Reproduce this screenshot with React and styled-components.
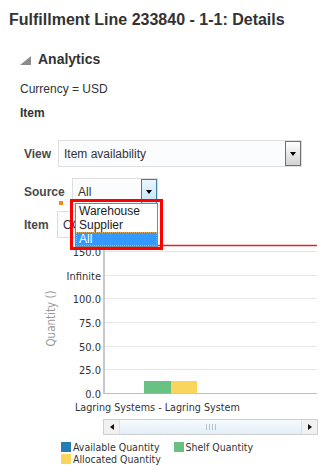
import styled, { createGlobalStyle } from "styled-components";

const GlobalStyle = createGlobalStyle`
  body {
    margin: 0;
    background: #fff;
    font-family: "Liberation Sans", Arial, sans-serif;
    color: #333;
  }
`;

const CHART_FONT = '"DejaVu Sans Condensed", "DejaVu Sans", sans-serif';

const Page = styled.div`
  width: 326px;
  height: 476px;
  overflow: hidden;
`;

const Title = styled.h1`
  margin: 0;
  padding: 11px 0 0 9px;
  font-size: 16px;
  line-height: 18px;
  font-weight: bold;
  color: #333;
  white-space: nowrap;
`;

const SectionHeader = styled.div`
  display: flex;
  align-items: center;
  gap: 7px;
  margin-top: 22px;
  padding-left: 20px;
`;

const Disclosure = styled.span`
  width: 0;
  height: 0;
  margin-top: 2px;
  border-left: 11px solid transparent;
  border-bottom: 9px solid #8c8c8c;
`;

const SectionTitle = styled.h2`
  margin: 0;
  font-size: 14px;
  line-height: 16px;
  font-weight: bold;
  color: #333;
`;

const Currency = styled.div`
  margin-top: 15px;
  padding-left: 20px;
  font-size: 12px;
  line-height: 14px;
`;

const SubHeading = styled.div`
  margin-top: 10px;
  padding-left: 20px;
  font-size: 12px;
  line-height: 14px;
  font-weight: bold;
`;

const Form = styled.div`
  position: relative;
  margin-top: 20px;
`;

const Row = styled.div`
  position: relative;
  display: flex;
  align-items: center;
  padding-left: 24px;
  margin-top: ${(p) => p.$gap || 0}px;
`;

const Label = styled.label`
  width: ${(p) => p.$width}px;
  flex-shrink: 0;
  font-size: 12px;
  font-weight: bold;
  color: #4a4a4a;
`;

const Field = styled.div`
  box-sizing: border-box;
  width: ${(p) => p.$width}px;
  height: 27px;
  display: flex;
  align-items: center;
  border: 1px solid #dedede;
  background: #fbfcfe;
  font-size: 12px;
  color: #333;
`;

const Value = styled.span`
  flex: 1;
  padding-left: 5px;
  white-space: nowrap;
`;

const DropButton = styled.span`
  box-sizing: border-box;
  width: 16px;
  height: 25px;
  display: flex;
  align-items: center;
  justify-content: center;
  border: 1px solid ${(p) => (p.$active ? "#3c7fb1" : "#707070")};
  background: ${(p) =>
    p.$active
      ? "linear-gradient(#eaf6fd, #c4e5f7)"
      : "linear-gradient(#ffffff, #d2d2d2)"};
`;

const Arrow = styled.span`
  width: 0;
  height: 0;
  border-left: 3.5px solid transparent;
  border-right: 3.5px solid transparent;
  border-top: 4px solid #000;
`;

const Marker = styled.span`
  position: absolute;
  left: 59px;
  top: 23px;
  width: 4px;
  height: 4px;
  background: #f28c0f;
`;

const Highlight = styled.div`
  position: absolute;
  left: 70px;
  top: 59px;
  width: 93px;
  height: 51px;
  box-sizing: border-box;
  border: 3px solid #ff0000;
  z-index: 3;
  pointer-events: none;
`;

const OptionList = styled.ul`
  position: absolute;
  left: 75px;
  top: 63px;
  width: 83px;
  margin: 0;
  padding: 0;
  list-style: none;
  box-sizing: border-box;
  border: 1px solid #7f8790;
  background: #fff;
  z-index: 2;
`;

const Option = styled.li`
  box-sizing: border-box;
  height: 14px;
  line-height: 13px;
  padding-left: 2px;
  font-size: 12px;
  color: ${(p) => (p.$selected ? "#fff" : "#1c1c1c")};
  background: ${(p) => (p.$selected ? "#3399ff" : "transparent")};
  border: 1px dotted ${(p) => (p.$selected ? "#d7a85a" : "transparent")};
`;

const Chart = styled.svg`
  display: block;
  margin-top: 2px;
  font-family: ${CHART_FONT};
`;

const Scrollbar = styled.div`
  box-sizing: border-box;
  display: flex;
  width: 215px;
  height: 16px;
  margin: 1px 0 0 103px;
  border: 1px solid #cfcfcf;
  background: #f3f3f3;
`;

const ScrollButton = styled.span`
  width: 15px;
  display: flex;
  align-items: center;
  justify-content: center;
  background: #f1f1f1;
`;

const ScrollArrow = styled.span`
  width: 0;
  height: 0;
  border-top: 3px solid transparent;
  border-bottom: 3px solid transparent;
  ${(p) =>
    p.$dir === "left"
      ? "border-right: 4px solid #111;"
      : "border-left: 4px solid #111;"}
`;

const Thumb = styled.span`
  flex: 1;
  display: flex;
  align-items: center;
  justify-content: center;
  gap: 2px;
  background: linear-gradient(#f7fbfe, #e3eef8);
  border-left: 1px solid #d6e2ee;
  border-right: 1px solid #d6e2ee;
`;

const Grip = styled.span`
  width: 1px;
  height: 6px;
  background: #b9c2ca;
`;

const Legend = styled.div`
  display: flex;
  flex-wrap: wrap;
  column-gap: 14px;
  width: 210px;
  margin: 6px 0 0 61px;
  font-family: ${CHART_FONT};
  font-size: 10.5px;
  line-height: 12px;
  color: #333;
`;

const LegendItem = styled.div`
  display: flex;
  align-items: center;
  gap: 2px;
  white-space: nowrap;
`;

const Swatch = styled.span`
  width: 10px;
  height: 10px;
  background: ${(p) => p.$color};
`;

const gridRows = [
  { y: 251.5, label: "150.0" },
  { y: 275.5, label: "Infinite" },
  { y: 298.5, label: "100.0" },
  { y: 322.5, label: "75.0" },
  { y: 346.5, label: "50.0" },
  { y: 369.5, label: "25.0" },
];

const legend = [
  { color: "#267db3", label: "Available Quantity" },
  { color: "#68c182", label: "Shelf Quantity" },
  { color: "#fad55c", label: "Allocated Quantity" },
];

function AvailabilityChart() {
  return (
    <Chart width="326" height="178" viewBox="0 240 326 178">
      <line x1="104" x2="317" y1="245.5" y2="245.5" stroke="#e02424" strokeWidth="1.6" />
      {gridRows.map((r) => (
        <g key={r.label}>
          <line x1="105" x2="317" y1={r.y} y2={r.y} stroke="#e6e6e6" />
          <text x="101" y={r.y + 4} textAnchor="end" fontSize="11" fill="#333">
            {r.label}
          </text>
        </g>
      ))}
      <line x1="104" x2="317" y1="393.5" y2="393.5" stroke="#bdbdbd" />
      <line x1="104" x2="104" y1="245" y2="394" stroke="#c9c9c9" strokeWidth="2" />
      <text x="101" y="397.5" textAnchor="end" fontSize="11" fill="#333">0.0</text>
      <text
        transform="translate(54.5 318.5) rotate(-90)"
        textAnchor="middle"
        fontSize="11.5"
        fill="#9a9a9a"
      >
        Quantity ()
      </text>
      <rect x="144" y="381" width="27" height="12.5" fill="#68c182" />
      <rect x="171" y="381" width="26" height="12.5" fill="#fad55c" />
      <text x="75" y="411" fontSize="10.7" fill="#333">
        Lagring Systems - Lagring System
      </text>
    </Chart>
  );
}

export default function App() {
  return (
    <Page>
      <GlobalStyle />
      <Title>Fulfillment Line 233840 - 1-1: Details</Title>
      <SectionHeader>
        <Disclosure />
        <SectionTitle>Analytics</SectionTitle>
      </SectionHeader>
      <Currency>Currency = USD</Currency>
      <SubHeading>Item</SubHeading>
      <Form>
        <Row>
          <Label $width={34}>View</Label>
          <Field $width={244}>
            <Value>Item availability</Value>
            <DropButton>
              <Arrow />
            </DropButton>
          </Field>
        </Row>
        <Row $gap={11}>
          <Label $width={48}>Source</Label>
          <Field $width={86}>
            <Value>All</Value>
            <DropButton $active>
              <Arrow />
            </DropButton>
          </Field>
          <Marker />
        </Row>
        <Row $gap={6}>
          <Label $width={33}>Item</Label>
          <Field $width={95}>
            <Value>OC1</Value>
          </Field>
        </Row>
        <OptionList>
          <Option>Warehouse</Option>
          <Option>Supplier</Option>
          <Option $selected>All</Option>
        </OptionList>
        <Highlight />
      </Form>
      <AvailabilityChart />
      <Scrollbar>
        <ScrollButton>
          <ScrollArrow $dir="left" />
        </ScrollButton>
        <Thumb>
          <Grip />
          <Grip />
          <Grip />
          <Grip />
        </Thumb>
        <ScrollButton>
          <ScrollArrow $dir="right" />
        </ScrollButton>
      </Scrollbar>
      <Legend>
        {legend.map((l) => (
          <LegendItem key={l.label}>
            <Swatch $color={l.color} />
            {l.label}
          </LegendItem>
        ))}
      </Legend>
    </Page>
  );
}
